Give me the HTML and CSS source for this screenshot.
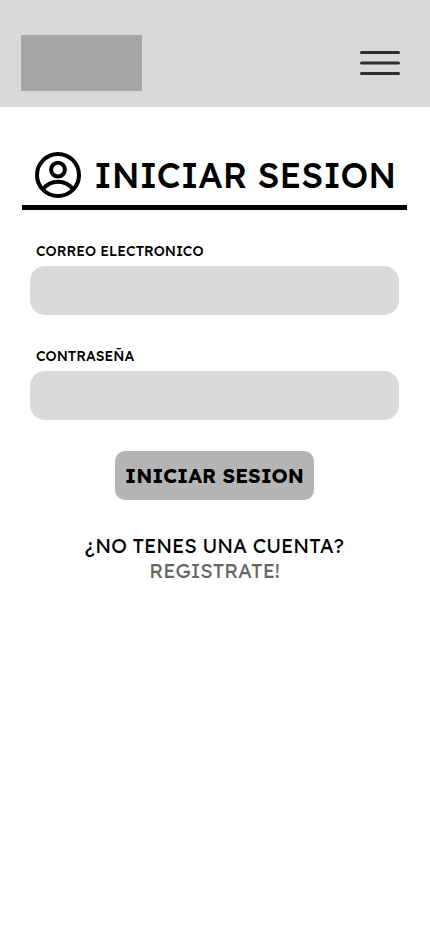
FILE: index.html
```html
<!DOCTYPE html>
<html lang="es">
<head>
<meta charset="utf-8">
<title>Iniciar sesion</title>
<link rel="stylesheet" href="styles.css">
</head>
<body>
<header class="topbar">
  <div class="logo"></div>
  <svg class="menu" width="42" height="26" viewBox="0 0 42 26"><path d="M2.500 2.500H39.500M2.500 13H39.500M2.500 23.500H39.500"/></svg>
</header>
<main class="login">
  <div class="heading">
    <svg class="user" width="46" height="46" viewBox="0 0 46 46"><circle cx="23" cy="23" r="21"/><circle cx="23" cy="17.600" r="6.900"/><path d="M8 37.500C15 27.200 31 27.200 38 37.500"/></svg>
    <h1>INICIAR SESION</h1>
  </div>
  <form class="form">
    <label for="mail">CORREO ELECTRONICO</label>
    <input id="mail" type="email">
    <label for="pass">CONTRASEÑA</label>
    <input id="pass" type="password">
    <button type="button">INICIAR SESION</button>
  </form>
  <div class="signup">
    <span>¿NO TENES UNA CUENTA?</span>
    <a href="#">REGISTRATE!</a>
  </div>
</main>
</body>
</html>
```
FILE: styles.css
```css
* { box-sizing: border-box; }
body { margin: 0; background: #fff; color: #000; font-family: Lexend, Lato, sans-serif; }
.topbar { height: 107px; padding: 35px 29px 16px 21px; display: flex; justify-content: space-between; background: #d9d9d9; }
.logo { width: 121px; height: 56px; background: #a6a6a6; }
.menu { margin-top: 15px; fill: none; stroke: #2b2f33; stroke-width: 3; stroke-linecap: round; }
.heading { display: flex; gap: 13px; margin: 45px 23px 0 22px; height: 58px; padding-left: 13px; border-bottom: 5px solid #000; white-space: nowrap; }
.user { flex: none; fill: none; stroke: #000; stroke-width: 4; }
h1 { margin: 0; font-size: 35px; line-height: 47px; font-weight: 500; }
.form { display: flex; flex-direction: column; padding: 31px 31px 0 30px; }
label { height: 25px; padding-left: 6px; font-size: 14px; line-height: 20px; font-weight: 500; }
input { height: 49px; border: 0; border-radius: 15px; background: #d9d9d9; margin: 0 0 31px; padding: 0 14px; }
button { width: 199px; height: 49px; border: 0; border-radius: 10px; background: #b5b5b5; align-self: center; display: flex; align-items: center; justify-content: center; padding: 0; font: 700 20px Lexend, Lato, sans-serif; color: #000; white-space: nowrap; }
.signup { margin-top: 33px; padding-right: 1px; display: flex; flex-direction: column; align-items: center; font-size: 20px; line-height: 25px; }
.signup a { color: #666; text-decoration: none; }
```
